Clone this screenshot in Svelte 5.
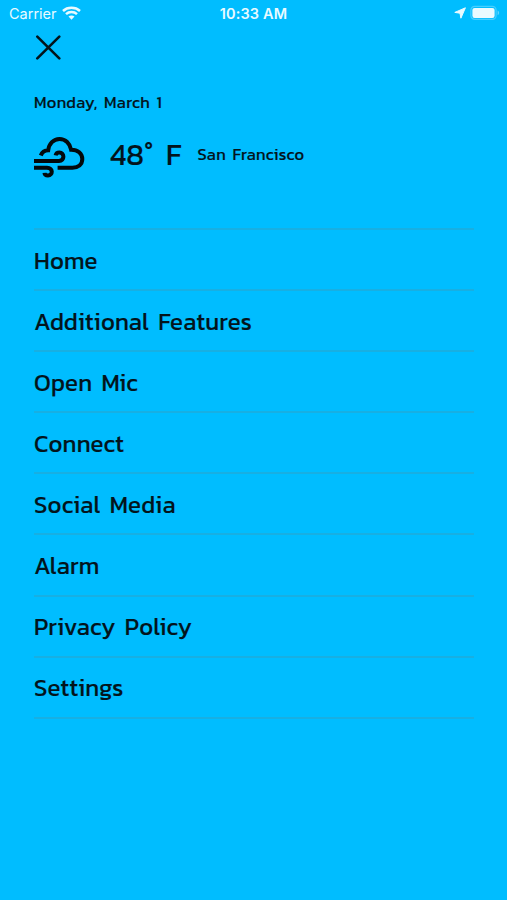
<script>
  const menuItems = [
    "Home",
    "Additional Features",
    "Open Mic",
    "Connect",
    "Social Media",
    "Alarm",
    "Privacy Policy",
    "Settings",
  ];

  const weather = { date: "Monday, March 1", temp: "48", city: "San Francisco" };
</script>

<div class="screen">
  <header class="status-bar">
    <div class="status-left">
      <span class="carrier">Carrier</span>
      <svg class="wifi" width="19" height="14" viewBox="0 0 19 14" fill="none">
        <path d="M1 5C5.6 .8 13.4 .8 18 5M4 8.1C7 5.3 12 5.3 15 8.1" stroke="currentColor" stroke-width="2.5" />
        <path d="M9.5 13.8L6.5 10.6C8.1 9.1 10.9 9.1 12.5 10.6Z" fill="currentColor" />
      </svg>
    </div>
    <span class="clock">10:33 AM</span>
    <div class="status-right">
      <svg width="12" height="12" viewBox="0 0 12 12"><path d="M11.4 .8L6.9 11.2L6 6.2L.8 5.4Z" fill="currentColor" stroke="currentColor" stroke-width="1" stroke-linejoin="round" /></svg>
      <svg width="30" height="16" viewBox="0 0 30 16" fill="none">
        <rect x=".9" y="1.4" width="25.2" height="13" rx="3.8" stroke="currentColor" stroke-opacity=".3" stroke-width="1.2" />
        <rect x="2.4" y="2.9" width="22.2" height="10" rx="2.2" fill="currentColor" />
        <path d="M27.6 5.6C29.6 6.4 29.6 9.4 27.6 10.2Z" fill="currentColor" fill-opacity=".4" />
      </svg>
    </div>
  </header>

  <button class="close" aria-label="Close">
    <svg width="26" height="26" viewBox="0 0 26 26" fill="none"><path d="M2.3 1.6L24.3 23.4M24.3 1.6L2.3 23.4" stroke="currentColor" stroke-width="2.6" stroke-linecap="round" /></svg>
  </button>

  <section class="weather">
    <div class="date">{weather.date}</div>
    <div class="weather-row">
      <svg class="cloud" width="52" height="42" viewBox="0 0 52 42" fill="none" stroke="currentColor" stroke-width="4">
        <path d="M6.8 19.5C8 16.2 10.7 14.4 14.2 14.3C15 7.8 19.5 3 25.5 3C31.5 3 36 7.5 37.1 13.7C43.8 13.6 48.3 17.5 48.3 23.1C48.3 28.7 44.2 31.7 38.4 31.7H23.6" />
        <path d="M0 24.9H25C31 24.9 30.6 16.6 25.4 16.6C23.2 16.6 22 17.7 21.6 19.4" />
        <path d="M0 31.7H13C19.4 31.7 19 39.4 14 39.4C11.6 39.4 10.6 38.3 10.5 36.8" />
      </svg>
      <span class="temp">{weather.temp}<span class="degree">°</span><span class="unit">F</span></span>
      <span class="city">{weather.city}</span>
    </div>
  </section>

  <nav class="menu">
    {#each menuItems as item}
      <a class="menu-item" href="#menu">{item}</a>
    {/each}
  </nav>
</div>

<style>
  :global(body) { margin: 0; background: #00bdff; }

  .screen {
    box-sizing: border-box;
    height: 900px;
    overflow: hidden;
    background: #00bdff;
    color: #03141c;
    font-family: Kanit, "Noto Sans", sans-serif;
    font-weight: 400;
    -webkit-text-stroke: 0.15px currentColor;
  }

  .status-bar {
    display: grid;
    grid-template-columns: 1fr auto 1fr;
    align-items: center;
    height: 27px;
    padding: 0 7px 0 9px;
    color: #e9faff;
    font: 400 14.5px/27px Inter, sans-serif;
    -webkit-text-stroke: 0;
  }

  .status-left { display: flex; align-items: center; gap: 5px; }
  .wifi { margin-top: -2px; }
  .status-right { display: flex; align-items: center; justify-content: flex-end; gap: 4px; }
  .status-right svg { margin-top: -1px; }
  .clock { margin-right: 2px; font-weight: 600; letter-spacing: 0.15px; }

  .close {
    display: block;
    width: 26px;
    height: 26px;
    margin: 8px 0 0 35px;
    padding: 0;
    border: none;
    background: none;
    color: inherit;
  }

  .close svg { display: block; }

  .weather { box-sizing: border-box; height: 167px; padding: 31px 34px 0; }
  .date { font-size: 16.5px; line-height: 22px; letter-spacing: 0.3px; word-spacing: 2.5px; white-space: nowrap; }
  .weather-row { display: flex; align-items: center; height: 46px; margin-top: 20px; }
  .cloud { flex-shrink: 0; color: #03090c; }
  .temp { display: flex; margin: -5px 0 0 24px; font-size: 30px; line-height: 40px; }
  .unit { margin-left: 12.5px; }
  .city { margin: -5px 0 0 16px; font-size: 16.5px; line-height: 22px; letter-spacing: 0.3px; word-spacing: 2.5px; white-space: nowrap; }

  .menu { margin: 0 33px 0 34px; border-top: 2px solid #18afe2; }

  .menu-item {
    display: flex;
    align-items: center;
    box-sizing: border-box;
    height: 61.1px;
    padding-top: 1px;
    border-bottom: 2px solid #18afe2;
    color: inherit;
    font-size: 24px;
    letter-spacing: 0.2px;
    word-spacing: 3.5px;
    text-decoration: none;
    white-space: nowrap;
  }
</style>
